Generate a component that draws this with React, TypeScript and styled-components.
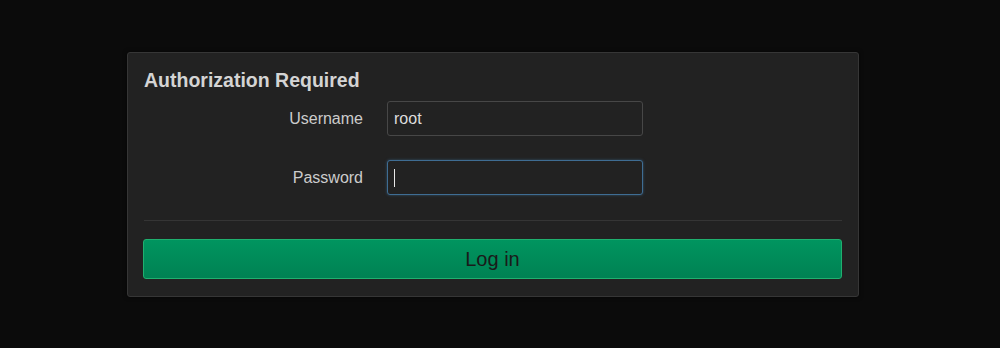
import React from "react";
import styled, { createGlobalStyle } from "styled-components";

const Global = createGlobalStyle`
  html, body { margin: 0; padding: 0; background: #0b0b0b; }
  body { font-family: "Liberation Sans", Arial, sans-serif; }
  * { box-sizing: border-box; }
`;

const Page = styled.div`
  width: 1000px;
  height: 348px;
  padding: 52px 0 0 127px;
  background: #0b0b0b;
`;

const Panel = styled.form`
  width: 732px;
  height: 245px;
  background: #222222;
  border: 1px solid #363636;
  border-radius: 3px;
  padding: 14px 16px 0 16px;
  display: flex;
  flex-direction: column;
  box-shadow: 0 0 4px rgba(0, 0, 0, 0.6);
`;

const Title = styled.h2`
  margin: 0;
  font-size: 19.5px;
  font-weight: bold;
  line-height: 26px;
  color: #d4d4d4;
`;

const Fields = styled.div`
  display: grid;
  grid-template-columns: 219px 256px;
  column-gap: 24px;
  row-gap: 24px;
  align-items: center;
  margin-top: 8px;
`;

const Label = styled.label`
  text-align: right;
  font-size: 16px;
  color: #cccccc;
`;

const Input = styled.div<{ $focused?: boolean }>`
  height: 35px;
  border: 1px solid ${(p) => (p.$focused ? "#3f6d93" : "#474747")};
  border-radius: 3px;
  background: #222222;
  color: #dddddd;
  font-size: 16px;
  padding: 0 6px;
  display: flex;
  align-items: center;
  box-shadow: ${(p) => (p.$focused ? "0 0 3px rgba(70,130,180,0.5)" : "none")};
`;

const Caret = styled.span`
  display: inline-block;
  width: 1px;
  height: 18px;
  background: #e8e8e8;
`;

const Divider = styled.hr`
  margin: 25px 0 0 0;
  border: none;
  border-top: 1px solid #353535;
`;

const Button = styled.button`
  margin: 18px 0 0 -1px;
  height: 40px;
  width: calc(100% + 1px);
  border: 1px solid #1fb06f;
  border-radius: 3px;
  background: linear-gradient(#00955f, #008253);
  color: #1a1a1a;
  font-family: "Liberation Sans", Arial, sans-serif;
  font-size: 20px;
  cursor: pointer;
`;

export default function App() {
  return (
    <>
      <Global />
      <Page>
        <Panel onSubmit={(e) => e.preventDefault()}>
          <Title>Authorization Required</Title>
          <Fields>
            <Label>Username</Label>
            <Input>root</Input>
            <Label>Password</Label>
            <Input $focused>
              <Caret />
            </Input>
          </Fields>
          <Divider />
          <Button type="submit">Log in</Button>
        </Panel>
      </Page>
    </>
  );
}
